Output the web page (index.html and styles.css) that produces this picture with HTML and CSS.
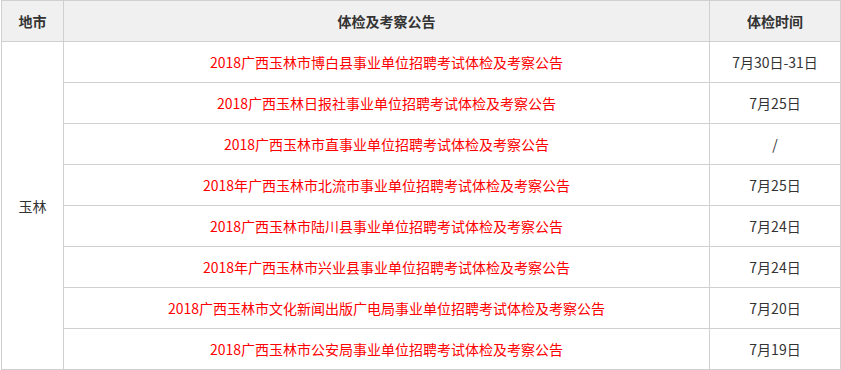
FILE: index.html
```html
<!DOCTYPE html>
<html lang="zh">
<head>
<meta charset="utf-8">
<link rel="stylesheet" href="styles.css">
</head>
<body>
<table class="exam">
  <colgroup>
    <col class="c-city">
    <col class="c-title">
    <col class="c-date">
  </colgroup>
  <thead>
    <tr><th>地市</th><th>体检及考察公告</th><th>体检时间</th></tr>
  </thead>
  <tbody>
    <tr><td class="city" rowspan="8">玉林</td><td class="title">2018广西玉林市博白县事业单位招聘考试体检及考察公告</td><td>7月30日-31日</td></tr>
    <tr><td class="title">2018广西玉林日报社事业单位招聘考试体检及考察公告</td><td>7月25日</td></tr>
    <tr><td class="title">2018广西玉林市直事业单位招聘考试体检及考察公告</td><td>/</td></tr>
    <tr><td class="title">2018年广西玉林市北流市事业单位招聘考试体检及考察公告</td><td>7月25日</td></tr>
    <tr><td class="title">2018广西玉林市陆川县事业单位招聘考试体检及考察公告</td><td>7月24日</td></tr>
    <tr><td class="title">2018年广西玉林市兴业县事业单位招聘考试体检及考察公告</td><td>7月24日</td></tr>
    <tr><td class="title">2018广西玉林市文化新闻出版广电局事业单位招聘考试体检及考察公告</td><td>7月20日</td></tr>
    <tr><td class="title">2018广西玉林市公安局事业单位招聘考试体检及考察公告</td><td>7月19日</td></tr>
  </tbody>
</table>
</body>
</html>
```
FILE: styles.css
```css
html, body {
  margin: 0;
  padding: 0;
  background: #fff;
}
body {
  padding-left: 1px;
  font-family: "Noto Sans CJK SC", "Noto Sans", sans-serif;
  font-size: 14px;
  color: #333;
}
.exam {
  border-collapse: collapse;
  table-layout: fixed;
  width: 839px;
}
.c-city { width: 62px; }
.c-title { width: 646px; }
.c-date { width: 131px; }
.exam th,
.exam td {
  border: 1px solid #d0d0d0;
  height: 40px;
  padding: 0;
  text-align: center;
  vertical-align: middle;
  line-height: 20px;
}
.exam th {
  background: #f0f0f0;
  font-weight: bold;
  color: #333;
}
.exam td.title {
  color: #ff0000;
}
```
